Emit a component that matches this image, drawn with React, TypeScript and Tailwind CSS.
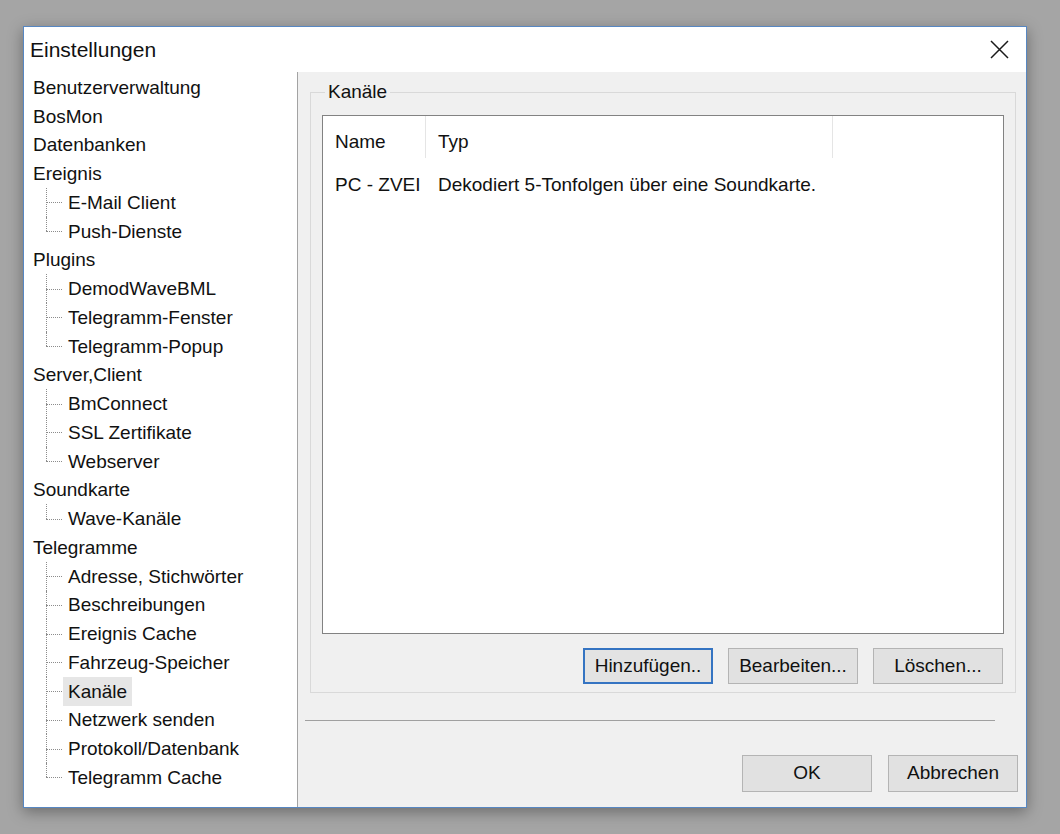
import React from 'react';

type Node = { label: string; children?: string[] };

const tree: Node[] = [
  { label: 'Benutzerverwaltung' },
  { label: 'BosMon' },
  { label: 'Datenbanken' },
  { label: 'Ereignis', children: ['E-Mail Client', 'Push-Dienste'] },
  { label: 'Plugins', children: ['DemodWaveBML', 'Telegramm-Fenster', 'Telegramm-Popup'] },
  { label: 'Server,Client', children: ['BmConnect', 'SSL Zertifikate', 'Webserver'] },
  { label: 'Soundkarte', children: ['Wave-Kanäle'] },
  {
    label: 'Telegramme',
    children: [
      'Adresse, Stichwörter',
      'Beschreibungen',
      'Ereignis Cache',
      'Fahrzeug-Speicher',
      'Kanäle',
      'Netzwerk senden',
      'Protokoll/Datenbank',
      'Telegramm Cache',
    ],
  },
];

const selected = 'Kanäle';

function TreeChild({ label, last }: { label: string; last: boolean }) {
  return (
    <div className="relative h-[28.75px] flex items-center">
      {/* dotted connector lines */}
      <span
        className={`absolute left-[22px] top-0 border-l border-dotted border-[#8c8c8c] ${last ? 'h-1/2' : 'h-full'}`}
      />
      <span className="absolute left-[22px] top-1/2 w-[16px] border-t border-dotted border-[#8c8c8c]" />
      <span
        className={`ml-[39px] px-[5px] h-full flex items-center ${label === selected ? 'bg-[#e6e6e6]' : ''}`}
      >
        {label}
      </span>
    </div>
  );
}

function Button({ children, focused }: { children: React.ReactNode; focused?: boolean }) {
  return (
    <button
      className={`w-[130px] h-[36px] flex items-center justify-center text-[19px] text-[#111] ${
        focused ? 'border-2 border-[#3574c2] bg-[#e3e3e3]' : 'border border-[#b4b4b4] bg-[#e1e1e1]'
      }`}
    >
      {children}
    </button>
  );
}

export default function App() {
  return (
    <div
      className="w-[1060px] h-[834px] bg-[#a5a5a5] pt-[26px] pl-[23px] overflow-hidden text-[#111]"
      style={{ fontFamily: '"Liberation Sans", Arial, sans-serif' }}
    >
      <div className="w-[1004px] h-[782px] border border-[#5787c2] bg-white flex flex-col shadow-[0_4px_14px_rgba(0,0,0,0.35)]">
        {/* Title bar */}
        <div className="h-[45px] flex items-center justify-between pl-[6px] pr-[17px] bg-white">
          <span className="text-[21px] leading-none">Einstellungen</span>
          <svg width="19" height="19" viewBox="0 0 19 19" fill="none" stroke="#1a1a1a" strokeWidth="1.5">
            <path d="M1 1 L18 18 M18 1 L1 18" />
          </svg>
        </div>

        <div className="flex flex-1 min-h-0">
          {/* Tree */}
          <div className="w-[274px] bg-white border-r border-[#a3a3a3] pt-[1px] text-[19px] leading-none">
            {tree.map((node) => (
              <div key={node.label}>
                <div className="h-[28.75px] flex items-center pl-[9px]">{node.label}</div>
                {node.children?.map((c, i) => (
                  <TreeChild key={c} label={c} last={i === node.children!.length - 1} />
                ))}
              </div>
            ))}
          </div>

          {/* Right page */}
          <div className="flex-1 bg-[#f0f0f0] flex flex-col text-[19px]">
            <div className="relative mt-[20px] ml-[12px] mr-[10px] h-[601px] border border-[#d9d9d9] flex flex-col px-[11px] pt-[22px] pb-[8px]">
              <span className="absolute left-[14px] top-[-12px] px-[3px] bg-[#f0f0f0] leading-[22px]">Kanäle</span>

              {/* List view */}
              <div className="h-[519px] border border-[#828282] bg-white">
                <div className="flex h-[42px]">
                  <div className="w-[103px] border-r border-[#e5e5e5] pl-[12px] pt-[15px] leading-[22px]">Name</div>
                  <div className="w-[407px] border-r border-[#e5e5e5] pl-[12px] pt-[15px] leading-[22px]">Typ</div>
                </div>
                <div className="flex pt-[16px] leading-[22px]">
                  <div className="w-[103px] pl-[12px]">PC - ZVEI</div>
                  <div className="pl-[12px]">Dekodiert 5-Tonfolgen über eine Soundkarte.</div>
                </div>
              </div>

              <div className="flex justify-end gap-[15px] mt-[14px] mr-[1px]">
                <Button focused>Hinzufügen..</Button>
                <Button>Bearbeiten...</Button>
                <Button>Löschen...</Button>
              </div>
            </div>

            <div className="mt-[27px] ml-[7px] w-[690px] border-t border-[#a0a0a0]" />

            <div className="flex justify-end gap-[16px] mt-[34px] mr-[8px]">
              <button className="w-[130px] h-[37px] border border-[#b4b4b4] bg-[#e1e1e1] text-[19px]">OK</button>
              <button className="w-[130px] h-[37px] border border-[#b4b4b4] bg-[#e1e1e1] text-[19px]">Abbrechen</button>
            </div>
          </div>
        </div>
      </div>
    </div>
  );
}
